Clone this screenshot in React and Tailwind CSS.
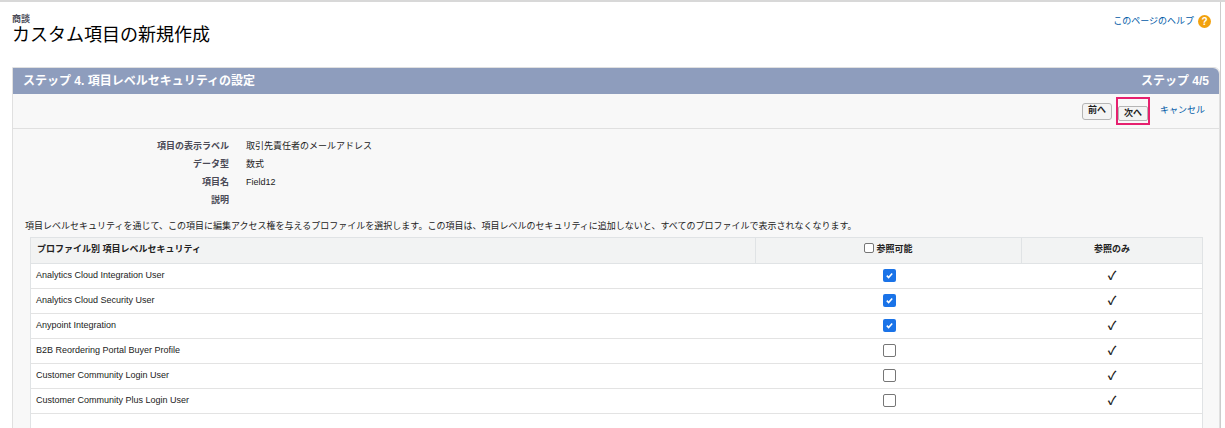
const rows=[["Analytics Cloud Integration User",true],["Analytics Cloud Security User",true],["Anypoint Integration",true],["B2B Reordering Portal Buyer Profile",false],["Customer Community Login User",false],["Customer Community Plus Login User",false]];
function Box({on}){return on?<span className="inline-flex w-[13px] h-[13px] rounded-[2px] bg-[#1a73e8] items-center justify-center"><svg width="9" height="9" viewBox="0 0 10 10"><path d="M2 5.2l2 2 4-4.5" stroke="#fff" strokeWidth="1.8" fill="none"/></svg></span>:<span className="inline-block w-[13px] h-[13px] rounded-[2px] border border-[#767676] bg-white"/>}
export default function App(){return(
<div className="w-[1225px] h-[428px] overflow-hidden bg-white border-t-2 border-[#d8d8d8] text-[#222] relative" style={{fontFamily:'Arial,"Liberation Sans","Noto Sans CJK JP",sans-serif'}}>
<div className="absolute right-[4px] top-0 bottom-0 w-px bg-[#ccc]"/>
<div className="flex justify-between pl-[12px] pr-[14px] pt-[12px]">
<div><div className="text-[9px] font-bold text-[#4a4a56] leading-[10px]">商談</div><div className="text-[18px] leading-[22px] text-black">カスタム項目の新規作成</div></div>
<div className="flex items-center gap-[4px] mt-[1px] self-start"><span className="text-[9px] text-[#015ba7]">このページのヘルプ</span><span className="w-[13px] h-[13px] rounded-full bg-[#f2a10d] text-white text-[10px] font-bold flex items-center justify-center">?</span></div>
</div>
<div className="ml-[12px] mr-[5px] mt-[21px] bg-[#f8f8f8] border border-[#e0e0e0] rounded-tr-[6px] h-[400px]">
<div className="h-[26px] bg-[#8e9dbd] rounded-tr-[6px] flex items-center justify-between px-[10px] text-white font-bold text-[12px]"><span>ステップ 4. 項目レベルセキュリティの設定</span><span>ステップ 4/5</span></div>
<div className="h-[35px] border-b border-[#e0e0e0] flex items-center justify-end gap-[4px] pr-[14px]">
<button className="h-[17px] px-[5px] text-[9px] font-bold border border-[#b5b5b5] rounded-[3px] bg-[#f4f4f4]">前へ</button>
<span className="border-2 border-[#e6206f]"><button className="h-[15px] px-[5px] text-[9px] font-bold border border-[#b5b5b5] rounded-[2px] bg-[#f4f4f4]">次へ</button></span>
<span className="text-[9px] text-[#015ba7] ml-[6px]">キャンセル</span></div>
<div className="pt-[12px] text-[9px] space-y-[7px]">
{[["項目の表示ラベル","取引先責任者のメールアドレス"],["データ型","数式"],["項目名","Field12"],["説明",""]].map(([a,b])=>(
<div key={a} className="flex h-[11px] items-center"><div className="w-[216px] text-right font-bold text-[#4a4a56]">{a}</div><div className="ml-[17px]">{b}</div></div>))}
</div>
<div className="text-[9px] mt-[14px] ml-[12px]">項目レベルセキュリティを通じて、この項目に編集アクセス権を与えるプロファイルを選択します。この項目は、項目レベルのセキュリティに追加しないと、すべてのプロファイルで表示されなくなります。</div>
<div className="ml-[17px] mr-[16px] mt-[3px] border border-[#e0e3e5] bg-white text-[9px]">
<div className="flex h-[26px] bg-[#f2f3f3] border-b border-[#e0e3e5] font-bold">
<div className="w-[725px] pl-[6px] flex items-center border-r border-[#e0e3e5]">プロファイル別 項目レベルセキュリティ</div>
<div className="w-[266px] flex items-center justify-center gap-[2px] border-r border-[#e0e3e5]"><span className="inline-block w-[10px] h-[10px] border border-[#767676] rounded-[2px] bg-white -mt-[4px]"/>参照可能</div>
<div className="flex-1 flex items-center justify-center">参照のみ</div></div>
{rows.map(([n,c])=>(<div key={n} className="flex h-[25px] border-b border-[#e3e3e3] items-center">
<div className="w-[725px] pl-[5px]">{n}</div><div className="w-[266px] flex justify-center"><Box on={c}/></div><div className="flex-1 text-center text-[12px] font-bold">✓</div></div>))}
<div className="h-[25px]"/>
</div></div></div>)}
